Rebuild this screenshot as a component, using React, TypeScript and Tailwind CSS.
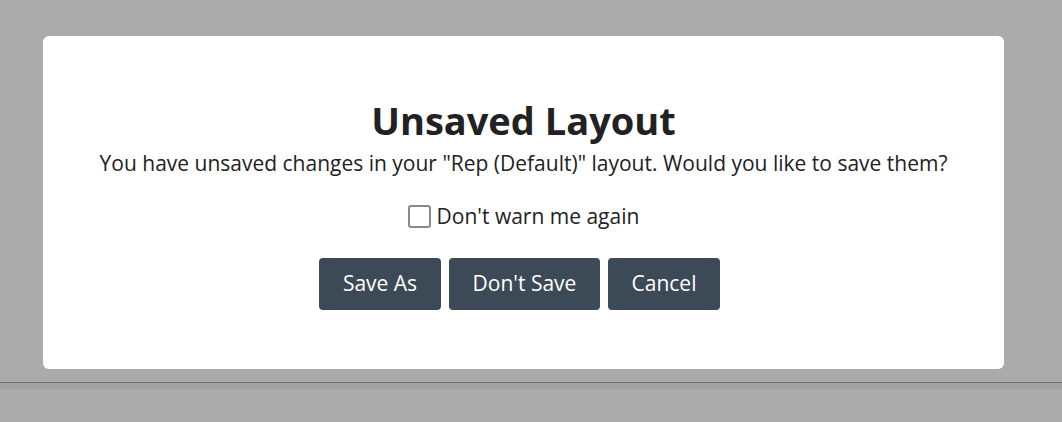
export default function App() {
  return (
    <div className="h-[422px] w-[1062px] bg-[#ababab] font-['Open_Sans',sans-serif] text-[#222222] flex flex-col">
      <div className="pt-[36px]">
        <div className="ml-[43px] w-[961px] h-[333px] rounded-[6px] bg-white flex flex-col items-center pt-[58px]">
          <h1 className="text-[38px] font-bold leading-[52px]">Unsaved Layout</h1>
          <p className="text-[21px] leading-[29px] mt-[3px]">
            You have unsaved changes in your "Rep (Default)" layout. Would you like to save them?
          </p>
          <label className="mt-[24px] flex items-center gap-[6px] text-[21px] leading-[29px]">
            <span className="h-[23px] w-[23px] rounded-[3px] border-2 border-[#8a8a8a] bg-white" />
            <span>Don't warn me again</span>
          </label>
          <div className="mt-[27px] mr-[8px] flex gap-[8px]">
            <button className="h-[52px] w-[122px] rounded-[4px] bg-[#3c4a57] text-[21px] text-white">Save As</button>
            <button className="h-[52px] w-[151px] rounded-[4px] bg-[#3c4a57] text-[21px] text-white">Don't Save</button>
            <button className="h-[52px] w-[112px] rounded-[4px] bg-[#3c4a57] text-[21px] text-white">Cancel</button>
          </div>
        </div>
      </div>
      <div className="mt-[13px] h-[1px] bg-[#6f6f6f]" />
      <div className="h-[6px] bg-[#a3a3a3]" />
      <div className="flex-1 bg-[#ababab]" />
    </div>
  );
}
